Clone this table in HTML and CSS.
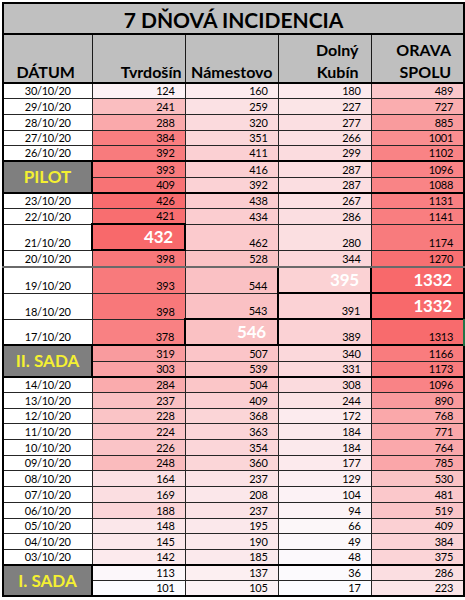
FILE: index.html
```html
<!DOCTYPE html>
<html lang="sk">
<head>
<meta charset="utf-8">
<title>7 DŇOVÁ INCIDENCIA</title>
<link rel="stylesheet" href="styles.css">
</head>
<body>
<div class="sheet">
<table class="grid">
  <colgroup>
    <col class="c-date"><col class="c-t"><col class="c-n"><col class="c-d"><col class="c-o">
  </colgroup>
  <thead>
    <tr class="title-row"><th colspan="5" class="title">7 DŇOVÁ INCIDENCIA</th></tr>
    <tr class="head-row">
      <th class="h-date">DÁTUM</th>
      <th class="h-t">Tvrdošín</th>
      <th class="h-n">Námestovo</th>
      <th class="h-d">Dolný<br>Kubín</th>
      <th class="h-o">ORAVA<br>SPOLU</th>
    </tr>
  </thead>
  <tbody>
    <tr><td class="d">30/10/20</td><td class="n t">124</td><td class="n o">160</td><td class="n o">180</td><td class="n o">489</td></tr>
    <tr><td class="d">29/10/20</td><td class="n t">241</td><td class="n o">259</td><td class="n o">227</td><td class="n o">727</td></tr>
    <tr><td class="d">28/10/20</td><td class="n t">288</td><td class="n o">320</td><td class="n o">277</td><td class="n o">885</td></tr>
    <tr><td class="d">27/10/20</td><td class="n t">384</td><td class="n o">351</td><td class="n o">266</td><td class="n o">1001</td></tr>
    <tr><td class="d">26/10/20</td><td class="n t">392</td><td class="n o">411</td><td class="n o">299</td><td class="n o">1102</td></tr>
    <tr class="gtop"><td class="grp" rowspan="2">PILOT</td><td class="n t">393</td><td class="n o">416</td><td class="n o">287</td><td class="n o">1096</td></tr>
    <tr><td class="n t">409</td><td class="n o">392</td><td class="n o">287</td><td class="n o">1088</td></tr>
    <tr class="gtop"><td class="d">23/10/20</td><td class="n t">426</td><td class="n o">438</td><td class="n o">267</td><td class="n o">1131</td></tr>
    <tr><td class="d">22/10/20</td><td class="n t">421</td><td class="n o">434</td><td class="n o">286</td><td class="n o">1141</td></tr>
    <tr class="tall"><td class="d">21/10/20</td><td class="n t box big">432</td><td class="n o">462</td><td class="n o">280</td><td class="n o">1174</td></tr>
    <tr class="mid"><td class="d">20/10/20</td><td class="n t">398</td><td class="n o">528</td><td class="n o">344</td><td class="n o">1270</td></tr>
    <tr class="tall shade-top"><td class="d">19/10/20</td><td class="n t">393</td><td class="n o">544</td><td class="n o box big">395</td><td class="n o box big">1332</td></tr>
    <tr class="tall"><td class="d">18/10/20</td><td class="n t">398</td><td class="n o">543</td><td class="n o box">391</td><td class="n o box big">1332</td></tr>
    <tr class="tall"><td class="d">17/10/20</td><td class="n t">378</td><td class="n o box big">546</td><td class="n o">389</td><td class="n o">1313</td></tr>
    <tr class="gtop"><td class="grp" rowspan="2">II. SADA</td><td class="n t">319</td><td class="n o">507</td><td class="n o">340</td><td class="n o">1166</td></tr>
    <tr><td class="n t">303</td><td class="n o">539</td><td class="n o">331</td><td class="n o">1173</td></tr>
    <tr class="gtop"><td class="d">14/10/20</td><td class="n t">284</td><td class="n o">504</td><td class="n o">308</td><td class="n o">1096</td></tr>
    <tr><td class="d">13/10/20</td><td class="n t">237</td><td class="n o">409</td><td class="n o">244</td><td class="n o">890</td></tr>
    <tr><td class="d">12/10/20</td><td class="n t">228</td><td class="n o">368</td><td class="n o">172</td><td class="n o">768</td></tr>
    <tr><td class="d">11/10/20</td><td class="n t">224</td><td class="n o">363</td><td class="n o">184</td><td class="n o">771</td></tr>
    <tr><td class="d">10/10/20</td><td class="n t">226</td><td class="n o">354</td><td class="n o">184</td><td class="n o">764</td></tr>
    <tr><td class="d">09/10/20</td><td class="n t">248</td><td class="n o">360</td><td class="n o">177</td><td class="n o">785</td></tr>
    <tr><td class="d">08/10/20</td><td class="n t">164</td><td class="n o">237</td><td class="n o">129</td><td class="n o">530</td></tr>
    <tr><td class="d">07/10/20</td><td class="n t">169</td><td class="n o">208</td><td class="n o">104</td><td class="n o">481</td></tr>
    <tr><td class="d">06/10/20</td><td class="n t">188</td><td class="n o">237</td><td class="n o">94</td><td class="n o">519</td></tr>
    <tr><td class="d">05/10/20</td><td class="n t">148</td><td class="n o">195</td><td class="n o">66</td><td class="n o">409</td></tr>
    <tr><td class="d">04/10/20</td><td class="n t">145</td><td class="n o">190</td><td class="n o">49</td><td class="n o">384</td></tr>
    <tr><td class="d">03/10/20</td><td class="n t">142</td><td class="n o">185</td><td class="n o">48</td><td class="n o">375</td></tr>
    <tr class="gtop"><td class="grp" rowspan="2">I. SADA</td><td class="n t">113</td><td class="n o">137</td><td class="n o">36</td><td class="n o">286</td></tr>
    <tr><td class="n t">101</td><td class="n o">105</td><td class="n o">17</td><td class="n o">223</td></tr>
  </tbody>
</table>
<div class="sel-mark"></div>
</div>
<script src="script.js"></script>
</body>
</html>
```
FILE: styles.css
```css
html, body {
  margin: 0;
  padding: 0;
  background: #ffffff;
}
body {
  font-family: "Lato", "Liberation Sans", sans-serif;
  color: #000;
}
.sheet {
  position: relative;
  padding: 2px 0 0 2px;
}
.grid {
  border-collapse: collapse;
  table-layout: fixed;
  width: 461px;
  border: 2px solid #000;
}
.c-date { width: 89px; }
.c-t { width: 93px; }
.c-n { width: 93px; }
.c-d { width: 93px; }
.c-o { width: 93px; }

.title-row { height: 30px; }
.title {
  background: #c0c0c0;
  border: 2px solid #000;
  font-weight: 700;
  font-size: 21px;
  line-height: 26px;
  padding: 3px 0 0 0;
  text-align: center;
  vertical-align: middle;
}
.head-row { height: 49px; }
.head-row th {
  background: #bfbfbf;
  border: 1px solid #1a1a1a;
  border-bottom: 2px solid #000;
  font-weight: 700;
  font-size: 16px;
  line-height: 21.5px;
  vertical-align: bottom;
  padding: 0;
  text-align: right;
  white-space: nowrap;
}
.head-row .h-date { text-align: center; padding-right: 4px; }
.head-row .h-t { padding-right: 3px; }
.head-row .h-n { padding-right: 5px; }
.head-row .h-d { padding-right: 12px; }
.head-row .h-o { padding-right: 12px; }

tbody tr { height: 15.7px; }
tbody tr.tall { height: 26px; }
tbody tr.mid { height: 17.3px; }

td {
  border: 1px solid #262626;
  padding: 0 0 1px 0;
  font-size: 11px;
  line-height: 13px;
  letter-spacing: -0.3px;
  vertical-align: bottom;
  white-space: nowrap;
}
td.d {
  text-align: center;
  background: #fff;
}
td.n {
  text-align: right;
  padding-right: 10px;
}
tr.gtop td { border-top: 2px solid #000; }
tr.mid td { border-bottom: 2px solid #6a6a6a; }

td.box { border: 2px solid #000; }
td.big {
  color: #fff;
  font-weight: 700;
  font-size: 17px;
  line-height: 20px;
  letter-spacing: -0.2px;
  padding-bottom: 2px;
  padding-right: 11px;
}
td.grp {
  background: #7f7f7f;
  color: #f4f032;
  border: 2px solid #000;
  font-weight: 700;
  font-size: 17px;
  line-height: 20px;
  letter-spacing: 0;
  text-align: center;
  vertical-align: middle;
  padding: 0;
}
.sel-mark {
  position: absolute;
  left: 463px;
  top: 319px;
  width: 2px;
  height: 27px;
  background: #217346;
}
```
FILE: script.js
```js
(function () {
  var lo = [252, 252, 255];
  var hi = [248, 105, 107];
  function paint(cells, min, max) {
    cells.forEach(function (td) {
      var v = parseFloat(td.textContent);
      var t = Math.max(0, Math.min(1, (v - min) / (max - min)));
      var c = lo.map(function (a, i) { return Math.round(a + (hi[i] - a) * t); });
      td.style.backgroundColor = 'rgb(' + c.join(',') + ')';
    });
  }
  paint(Array.prototype.slice.call(document.querySelectorAll('td.t')), 101, 432);
  paint(Array.prototype.slice.call(document.querySelectorAll('td.o')), 17, 1332);
})();
```
